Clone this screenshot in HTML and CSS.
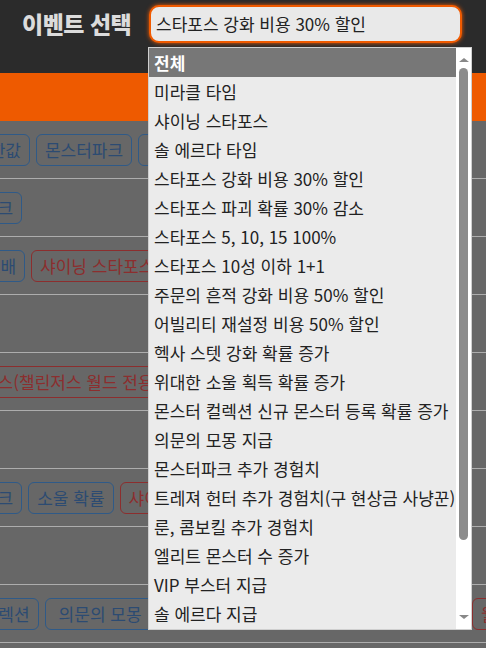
FILE: index.html
```html
<!DOCTYPE html>
<html lang="ko">
<head>
  <meta charset="UTF-8" />
  <meta name="viewport" content="width=device-width, initial-scale=1.0"/>
  <title>이벤트 선택</title>
  <link rel="stylesheet" href="styles.css">
</head>
<body>
  <!-- Header -->
  <div class="header">
    <div class="header-label">이벤트 선택</div>
    <div class="select-box">스타포스 강화 비용 30% 할인</div>
  </div>

  <div class="nav-bar"></div>

  <!-- Event rows -->
  <div class="rows">
    <div class="row">
      <div class="tags shift-1">
        <span class="tag">상한값</span>
        <span class="tag">몬스터파크</span>
        <span class="tag">소울 확률</span>
      </div>
    </div>
    <div class="row">
      <div class="tags shift-2">
        <span class="tag">몬스터파크</span>
      </div>
    </div>
    <div class="row">
      <div class="tags shift-3">
        <span class="tag">2배</span>
        <span class="tag red">샤이닝 스타포스</span>
      </div>
    </div>
    <div class="row"></div>
    <div class="row">
      <div class="tags shift-5">
        <span class="tag red">샤이닝 스타포스(챌린저스 월드 전용)</span>
      </div>
    </div>
    <div class="row"></div>
    <div class="row">
      <div class="tags shift-2">
        <span class="tag">몬스터파크</span>
        <span class="tag">소울 확률</span>
        <span class="tag red">샤이닝 스타포스</span>
      </div>
    </div>
    <div class="row"></div>
    <div class="row">
      <div class="tags shift-9">
        <span class="tag">몬스터 컬렉션</span>
        <span class="tag wide">의문의 모몽</span>
      </div>
      <div class="tail">
        <span class="tag red">월드 전용</span>
      </div>
    </div>
  </div>

  <!-- Open dropdown -->
  <div class="dropdown">
    <ul class="options">
      <li class="option active">전체</li>
      <li class="option">미라클 타임</li>
      <li class="option">샤이닝 스타포스</li>
      <li class="option">솔 에르다 타임</li>
      <li class="option">스타포스 강화 비용 30% 할인</li>
      <li class="option">스타포스 파괴 확률 30% 감소</li>
      <li class="option">스타포스 5, 10, 15 100%</li>
      <li class="option">스타포스 10성 이하 1+1</li>
      <li class="option">주문의 흔적 강화 비용 50% 할인</li>
      <li class="option">어빌리티 재설정 비용 50% 할인</li>
      <li class="option">헥사 스텟 강화 확률 증가</li>
      <li class="option">위대한 소울 획득 확률 증가</li>
      <li class="option">몬스터 컬렉션 신규 몬스터 등록 확률 증가</li>
      <li class="option">의문의 모몽 지급</li>
      <li class="option">몬스터파크 추가 경험치</li>
      <li class="option">트레져 헌터 추가 경험치(구 현상금 사냥꾼)</li>
      <li class="option">룬, 콤보킬 추가 경험치</li>
      <li class="option">엘리트 몬스터 수 증가</li>
      <li class="option">VIP 부스터 지급</li>
      <li class="option">솔 에르다 지급</li>
    </ul>
    <div class="scrollbar">
      <div class="arrow up"></div>
      <div class="thumb"></div>
      <div class="arrow down"></div>
    </div>
  </div>
</body>
</html>
```

FILE: styles.css
```css
body {
  margin: 0;
  font-family: "Noto Sans CJK KR", "Noto Sans", sans-serif;
  background-color: #676767;
  color: #222;
  height: 100vh;
  overflow: hidden;
}

.header {
  height: 73px;
  background-color: #2b2b2b;
  display: flex;
  align-items: flex-start;
  padding-top: 5px;
  box-sizing: border-box;
}

.header-label {
  width: 149px;
  padding-left: 22px;
  box-sizing: border-box;
  font-size: 23px;
  font-weight: 900;
  line-height: 37px;
  color: #dcdcdc;
  letter-spacing: -0.5px;
}

.select-box {
  width: 313px;
  height: 38px;
  box-sizing: border-box;
  border: 2px solid #f05a00;
  border-radius: 10px;
  box-shadow: 0 0 4px #f05a00;
  background-color: #e9e9e9;
  padding-left: 5px;
  font-size: 17px;
  line-height: 33px;
  color: #222;
}

.nav-bar {
  height: 48px;
  background-color: #ee5a00;
}

.row {
  height: 57px;
  border-bottom: 1px solid #adadad;
  display: flex;
  align-items: center;
  overflow: hidden;
  white-space: nowrap;
}

.tags {
  display: flex;
  gap: 6px;
  flex: 1;
}

.shift-1 { margin-left: -35px; }
.shift-2 { margin-left: -74px; }
.shift-3 { margin-left: -18px; }
.shift-5 { margin-left: -110px; }
.shift-9 { margin-left: -78px; }

.tail {
  flex: 0 0 14px;
  overflow: hidden;
  display: flex;
}

.tag {
  flex: none;
  height: 32px;
  box-sizing: border-box;
  padding: 0 8px;
  border: 1px solid #2f5a88;
  border-radius: 6px;
  font-size: 17px;
  line-height: 30px;
  color: #2c4b72;
}

.tag.wide {
  padding: 0 13px;
}

.tag.red {
  border-color: #8c2e2e;
  color: #8c2e2e;
}

.dropdown {
  position: absolute;
  left: 148px;
  top: 47px;
  width: 324px;
  height: 583px;
  box-sizing: border-box;
  border: 1px solid #cfcfcf;
  background-color: #ebebeb;
  display: flex;
}

.options {
  list-style: none;
  margin: 0;
  padding: 0;
  flex: 1;
  overflow: hidden;
}

.option {
  height: 29px;
  line-height: 29px;
  padding-left: 5px;
  font-size: 17px;
  color: #222;
  white-space: nowrap;
}

.option.active {
  background-color: #777;
  color: #fff;
  font-weight: bold;
}

.scrollbar {
  width: 15px;
  background-color: #fff;
  display: flex;
  flex-direction: column;
  align-items: center;
}

.thumb {
  width: 9px;
  height: 472px;
  margin-top: 6px;
  margin-bottom: auto;
  background-color: #8c8c8c;
  border-radius: 5px;
}

.arrow {
  width: 0;
  height: 0;
  border-left: 5px solid transparent;
  border-right: 5px solid transparent;
}

.arrow.up {
  margin-top: 10px;
  border-bottom: 4px solid #888;
}

.arrow.down {
  margin-bottom: 10px;
  border-top: 4px solid #888;
}
```
